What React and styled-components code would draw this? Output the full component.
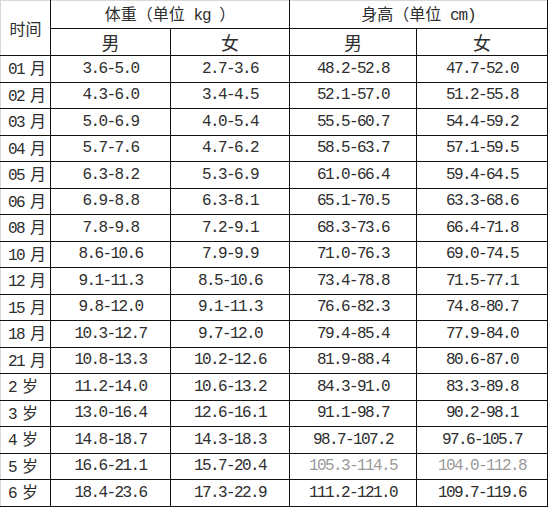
import styled, { createGlobalStyle } from 'styled-components';

const GlobalStyle = createGlobalStyle`
    html, body {
        margin: 0;
        padding: 0;
        background: #fff;
    }
`;

const rows = [
    ['01', '月', '3.6-5.0', '2.7-3.6', '48.2-52.8', '47.7-52.0'],
    ['02', '月', '4.3-6.0', '3.4-4.5', '52.1-57.0', '51.2-55.8'],
    ['03', '月', '5.0-6.9', '4.0-5.4', '55.5-60.7', '54.4-59.2'],
    ['04', '月', '5.7-7.6', '4.7-6.2', '58.5-63.7', '57.1-59.5'],
    ['05', '月', '6.3-8.2', '5.3-6.9', '61.0-66.4', '59.4-64.5'],
    ['06', '月', '6.9-8.8', '6.3-8.1', '65.1-70.5', '63.3-68.6'],
    ['08', '月', '7.8-9.8', '7.2-9.1', '68.3-73.6', '66.4-71.8'],
    ['10', '月', '8.6-10.6', '7.9-9.9', '71.0-76.3', '69.0-74.5'],
    ['12', '月', '9.1-11.3', '8.5-10.6', '73.4-78.8', '71.5-77.1'],
    ['15', '月', '9.8-12.0', '9.1-11.3', '76.6-82.3', '74.8-80.7'],
    ['18', '月', '10.3-12.7', '9.7-12.0', '79.4-85.4', '77.9-84.0'],
    ['21', '月', '10.8-13.3', '10.2-12.6', '81.9-88.4', '80.6-87.0'],
    ['2', '岁', '11.2-14.0', '10.6-13.2', '84.3-91.0', '83.3-89.8'],
    ['3', '岁', '13.0-16.4', '12.6-16.1', '91.1-98.7', '90.2-98.1'],
    ['4', '岁', '14.8-18.7', '14.3-18.3', '98.7-107.2', '97.6-105.7'],
    ['5', '岁', '16.6-21.1', '15.7-20.4', '105.3-114.5', '104.0-112.8'],
    ['6', '岁', '18.4-23.6', '17.3-22.9', '111.2-121.0', '109.7-119.6'],
];

const Table = styled.table`
    border-collapse: collapse;
    table-layout: fixed;
    width: 548px;
    color: #2e2e2e;
    font-family: "Noto Sans CJK SC", sans-serif;
`;

const HeadRow = styled.tr`
    height: ${(p) => p.h}px;
`;

const HeadCell = styled.th`
    border: 1px solid #111;
    border-top-color: ${(p) => (p.top ? '#d8d8d8' : '#111')};
    border-left-color: ${(p) => (p.first ? '#d8d8d8' : '#111')};
    font-weight: normal;
    font-size: ${(p) => p.size || 15}px;
    line-height: 1;
    padding: 0;
    text-align: center;
    vertical-align: middle;
    white-space: pre;
`;

const Unit = styled.span`
    font-family: "Liberation Mono", monospace;
    letter-spacing: -1px;
`;

const Row = styled.tr`
    height: 26.5px;
`;

const Label = styled.td`
    border: 1px solid #111;
    border-left-color: #d8d8d8;
    padding: 0 0 0 7px;
    font-size: 16px;
    line-height: 1;
    white-space: nowrap;
`;

const Digits = styled.span`
    font-family: "Liberation Mono", monospace;
    font-size: 16px;
    letter-spacing: -1.6px;
    margin-right: 6px;
`;

const Cell = styled.td`
    border: 1px solid #111;
    padding: 0;
    text-align: center;
    font-family: "Liberation Mono", "Noto Sans CJK SC", monospace;
    font-size: 16px;
    letter-spacing: -1.6px;
    line-height: 1;
    color: ${(p) => (p.faded ? '#9a9a9a' : '#2e2e2e')};
`;

function App() {
    return (
        <>
            <GlobalStyle />
            <Table>
                <colgroup>
                    <col style={{ width: 50 }} />
                    <col style={{ width: 120 }} />
                    <col style={{ width: 119 }} />
                    <col style={{ width: 127 }} />
                    <col style={{ width: 131 }} />
                </colgroup>
                <thead>
                    <HeadRow h={28}>
                        <HeadCell rowSpan={2} top first size={16}>时间</HeadCell>
                        <HeadCell colSpan={2} top size={16}>
                            体重（单位
                            <Unit> kg </Unit>
                            ）
                        </HeadCell>
                        <HeadCell colSpan={2} top size={16}>
                            身高（单位
                            <Unit> cm)</Unit>
                        </HeadCell>
                    </HeadRow>
                    <HeadRow h={27}>
                        <HeadCell size={18}>男</HeadCell>
                        <HeadCell size={18}>女</HeadCell>
                        <HeadCell size={18}>男</HeadCell>
                        <HeadCell size={18}>女</HeadCell>
                    </HeadRow>
                </thead>
                <tbody>
                    {rows.map(([num, unit, wm, wf, hm, hf]) => (
                        <Row key={num + unit}>
                            <Label>
                                <Digits>{num}</Digits>
                                {unit}
                            </Label>
                            <Cell>{wm}</Cell>
                            <Cell>{wf}</Cell>
                            <Cell faded={num === '5' && unit === '岁'}>{hm}</Cell>
                            <Cell faded={num === '5' && unit === '岁'}>{hf}</Cell>
                        </Row>
                    ))}
                </tbody>
            </Table>
        </>
    );
}

export default App;
